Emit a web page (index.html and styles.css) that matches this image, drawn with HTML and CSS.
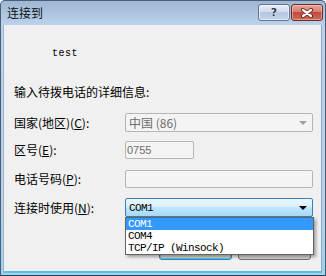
FILE: index.html
```html
<!DOCTYPE html>
<html lang="zh-CN">
<head>
<meta charset="utf-8">
<link rel="stylesheet" href="styles.css">
</head>
<body>
<div class="window">
  <div class="titlebar">
    <span class="title">连接到</span>
    <div class="caption-buttons">
      <div class="cap-btn help"><span>?</span></div>
      <div class="cap-btn close">
        <svg width="14" height="10" viewBox="0 0 14 10">
          <path d="M3 2 L11 8 M11 2 L3 8" stroke="#5a1f1c" stroke-width="4" stroke-linecap="round"/>
          <path d="M3 2 L11 8 M11 2 L3 8" stroke="#ffffff" stroke-width="2.2" stroke-linecap="round"/>
        </svg>
      </div>
    </div>
  </div>
  <div class="client">
    <div class="entry-name">test</div>
    <div class="heading">输入待拨电话的详细信息:</div>
    <div class="row row-country">
      <span class="label">国家(地区)(<u>C</u>):</span>
      <div class="combo disabled wide">
        <span class="value">中国 (86)</span>
        <span class="arrow gray"></span>
      </div>
    </div>
    <div class="row row-area">
      <span class="label">区号(<u>E</u>):</span>
      <div class="field disabled narrow"><span class="value">0755</span></div>
    </div>
    <div class="row row-phone">
      <span class="label">电话号码(<u>P</u>):</span>
      <div class="field disabled wide"></div>
    </div>
    <div class="row row-connect">
      <span class="label">连接时使用(<u>N</u>):</span>
      <div class="combo focused wide">
        <span class="value mono">COM1</span>
        <span class="arrow black"></span>
        <ul class="dropdown">
          <li class="selected">COM1</li>
          <li>COM4</li>
          <li>TCP/IP (Winsock)</li>
        </ul>
      </div>
    </div>
    <div class="buttons">
      <div class="btn default"></div>
      <div class="btn"></div>
    </div>
  </div>
</div>
</body>
</html>
```

FILE: styles.css
```css
* { box-sizing: border-box; }
html, body { margin: 0; padding: 0; }
body {
  width: 326px;
  height: 276px;
  overflow: hidden;
  font-family: "Noto Sans CJK SC", "Liberation Sans", sans-serif;
  font-size: 12px;
  color: #000;
  background: #ffffff;
}
.window {
  width: 326px;
  height: 276px;
  display: flex;
  flex-direction: column;
  background: linear-gradient(#9fb7d5, #bcd2ec 25px, #b9d1ea 200px, #9fd3ec);
  border-left: 1px solid #4b5e78;
  border-top: 1px solid #4b5e78;
  border-bottom: 1px solid #2f3c4c;
  border-right: 1px solid #4b5e78;
  border-radius: 5px 5px 0 0;
}
.titlebar {
  height: 24px;
  flex: none;
  display: flex;
  align-items: flex-start;
  justify-content: space-between;
  padding-left: 6px;
}
.title {
  margin-top: 4px;
  font-size: 12px;
  line-height: 16px;
  color: #111;
}
.caption-buttons {
  display: flex;
  gap: 1px;
  margin-top: 3px;
  margin-right: 2px;
}
.cap-btn {
  width: 32px;
  height: 17px;
  border-radius: 3px;
  display: flex;
  align-items: center;
  justify-content: center;
}
.help {
  border: 1px solid #5f7591;
  background: linear-gradient(#e6eef7, #cfdcec 45%, #b4c7df 50%, #c3d4e8);
  box-shadow: inset 0 0 0 1px rgba(255,255,255,0.55);
}
.help span {
  font-family: "DejaVu Sans", sans-serif;
  font-weight: bold;
  font-size: 11px;
  line-height: 11px;
  color: #2b3b52;
  text-shadow: 0 0 1px #fff, 0 0 1px #fff;
}
.close {
  border: 1px solid #6b2a26;
  background: linear-gradient(#e8a597, #d77e6e 45%, #c4493d 50%, #cf6b55);
  box-shadow: inset 0 0 0 1px rgba(255,220,210,0.45);
}
.client {
  flex: 1;
  margin: 0 3px 2px 2px;
  background: #f0f0f0;
  border-left: 1px solid #9db4cf;
  border-right: 1px solid #8aa7c6;
  border-bottom: 2px solid #58c2e6;
  display: flex;
  flex-direction: column;
  padding-left: 10px;
  padding-right: 8px;
  position: relative;
}
.entry-name {
  margin-top: 23px;
  height: 12px;
  line-height: 12px;
  padding-left: 38px;
  font-family: "Liberation Mono", "DejaVu Sans Mono", monospace;
  font-size: 10px;
  letter-spacing: 0.5px;
}
.heading {
  margin-top: 24px;
  height: 16px;
  line-height: 16px;
}
.row {
  display: flex;
  align-items: center;
}
.label {
  width: 111px;
  flex: none;
  line-height: 16px;
}
.row-country { margin-top: 13px; height: 19px; }
.row-area { margin-top: 9px; height: 18px; }
.row-phone { margin-top: 11px; height: 18px; }
.row-connect { margin-top: 10px; height: 19px; }
.wide { width: 189px; }
.narrow { width: 69px; }
.combo, .field {
  height: 100%;
  position: relative;
  display: flex;
  align-items: center;
  border-radius: 2px;
}
.disabled {
  border: 1px solid #b5b5b5;
  background: #f4f4f4;
  color: #6d6d6d;
}
.combo.disabled .value { padding-left: 3px; }
.field .value {
  padding-left: 1px;
  font-family: "Liberation Sans", sans-serif;
  font-size: 11px;
}
.focused {
  border: 1px solid #3c7fb1;
  background: linear-gradient(#eaf6fd, #d9f0fc 45%, #bee6fd 50%, #a7d9f5);
}
.value { line-height: 14px; }
.mono {
  font-family: "Liberation Mono", "DejaVu Sans Mono", monospace;
  font-size: 11px;
  letter-spacing: -0.6px;
  padding-left: 3px;
}
.arrow {
  position: absolute;
  right: 5px;
  top: 50%;
  margin-top: -2px;
  width: 0;
  height: 0;
  border-left: 4px solid transparent;
  border-right: 4px solid transparent;
}
.arrow.gray { border-top: 4px solid #a0a0a0; }
.arrow.black { border-top: 4px solid #000; }
.dropdown {
  position: absolute;
  left: -1px;
  top: 18px;
  width: 189px;
  margin: 0;
  padding: 0;
  list-style: none;
  background: #fff;
  border: 1px solid #646464;
  box-shadow: 2px 2px 3px rgba(0,0,0,0.35);
  z-index: 5;
  font-family: "Liberation Mono", "DejaVu Sans Mono", monospace;
  font-size: 11px;
  letter-spacing: -0.6px;
}
.dropdown li {
  height: 12px;
  line-height: 12px;
  padding-left: 2px;
}
.dropdown li.selected {
  background: #3399ff;
  color: #fff;
}
.buttons {
  margin-top: 20px;
  display: flex;
  justify-content: flex-end;
  gap: 6px;
  padding-right: 2px;
}
.btn {
  width: 73px;
  height: 23px;
  border: 1px solid #707070;
  border-radius: 3px;
  background: linear-gradient(#f2f2f2, #ebebeb 50%, #dddddd 51%, #cfcfcf);
}
.btn.default {
  border-color: #3c7fb1;
  box-shadow: inset 0 0 0 1px #48d1fb;
}
```
